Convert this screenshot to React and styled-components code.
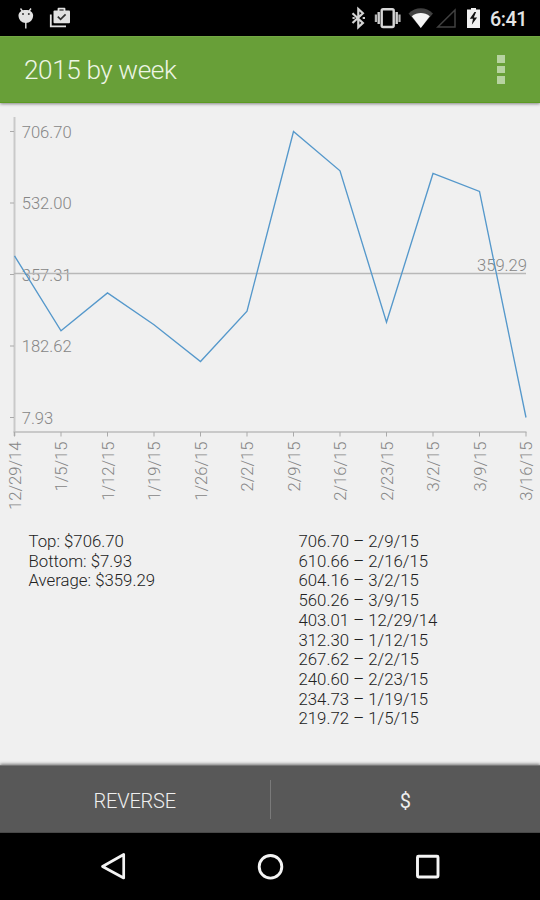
import React from 'react';
import styled, { createGlobalStyle } from 'styled-components';

const GlobalStyle = createGlobalStyle`
  * {
    box-sizing: border-box;
  }

  body {
    margin: 0;
    background: #000;
  }
`;

const Screen = styled.div`
  width: 540px;
  height: 900px;
  display: flex;
  flex-direction: column;
  overflow: hidden;
  background: #f0f0f0;
  font-family: Roboto, sans-serif;
  font-weight: 300;
`;

const StatusBar = styled.header`
  height: 36px;
  flex: none;
  display: flex;
  justify-content: space-between;
  background: #000;
`;

const StatusIcons = styled.svg`
  display: block;
  height: 36px;
  width: ${props => props.$width}px;
`;

const StatusRight = styled.div`
  display: flex;
  padding-right: 12px;
`;

const Clock = styled.time`
  color: #e4e4e4;
  font-size: 19.8px;
  font-weight: 500;
  letter-spacing: -0.5px;
  line-height: 39px;
  width: 38px;
  white-space: nowrap;
`;

const ActionBar = styled.div`
  height: 67px;
  flex: none;
  display: flex;
  align-items: center;
  justify-content: space-between;
  padding: 0 35px 0 24px;
  background: #689f38;
  border-top: 1px solid #73a844;
  border-bottom: 1px solid #5c9a22;
  box-shadow: 0 1px 3px rgba(0, 0, 0, 0.45);
`;

const Title = styled.h1`
  margin: 0;
  padding-top: 1px;
  color: #edf5e4;
  font-size: 26.2px;
  font-weight: 300;
  letter-spacing: -0.42px;
  line-height: 32px;
`;

const MenuButton = styled.div`
  display: flex;
  flex-direction: column;
  gap: 3px;
`;

const MenuDot = styled.span`
  width: 8px;
  height: 7.6px;
  background: #b7d3a1;
`;

const Chart = styled.svg`
  display: block;
  flex: none;
  width: 540px;
  height: 417px;
`;

const AxisLabel = styled.text`
  fill: #868686;
  font-family: Roboto, sans-serif;
  font-size: 16.6px;
  font-weight: 300;
`;

const Stats = styled.section`
  flex: 1;
  display: grid;
  grid-template-columns: 270px 1fr;
  padding: 12px 0 0 28.5px;
`;

const StatList = styled.ul`
  margin: 0;
  padding: 0;
  list-style: none;
  color: #222;
  font-size: 16.8px;
  line-height: 19.7px;
`;

const ButtonBar = styled.div`
  height: 68px;
  flex: none;
  display: flex;
  align-items: center;
  background: #585858;
  border-top: 1px solid #777;
  border-bottom: 1px solid #484848;
  box-shadow: 0 -1px 3px rgba(0, 0, 0, 0.5);
`;

const BarButton = styled.button`
  flex: 1;
  padding: 3px 0 0;
  border: 0;
  background: none;
  color: #efefef;
  font-family: inherit;
  font-size: 20px;
  font-weight: ${props => props.$weight || 300};
  letter-spacing: -0.2px;
  line-height: 40px;
`;

const Divider = styled.span`
  width: 1px;
  height: 39px;
  background: #7a7a7a;
`;

const NavBar = styled.nav`
  height: 67px;
  flex: none;
  background: #000;
`;

const NavIcons = styled.svg`
  display: block;
  width: 540px;
  height: 67px;
  fill: none;
  stroke: #f4f4f4;
  stroke-width: 2.9;
  stroke-linejoin: round;
`;

const weeks = [
  { date: '12/29/14', value: 403.01 },
  { date: '1/5/15', value: 219.72 },
  { date: '1/12/15', value: 312.3 },
  { date: '1/19/15', value: 234.73 },
  { date: '1/26/15', value: 144.7 },
  { date: '2/2/15', value: 267.62 },
  { date: '2/9/15', value: 706.7 },
  { date: '2/16/15', value: 610.66 },
  { date: '2/23/15', value: 240.6 },
  { date: '3/2/15', value: 604.16 },
  { date: '3/9/15', value: 560.26 },
  { date: '3/16/15', value: 7.93 },
];

const yTicks = [706.7, 532.0, 357.31, 182.62, 7.93];
const average = 359.29;

const MAX = 706.7;
const MIN = 7.93;
const LEFT = 14.5;
const RIGHT = 526;
const BASE = 329;

const xAt = i => LEFT + (i * (RIGHT - LEFT)) / (weeks.length - 1);
const yAt = value => 28.5 + ((MAX - value) / (MAX - MIN)) * 286;

const WeekChart = () => (
  <Chart viewBox="0 0 540 417">
    <path d={`M${LEFT} 14V${BASE + 4}`} stroke="#c9c9c9" strokeWidth="2" />
    <path d={`M${LEFT - 1} ${BASE}H${RIGHT + 0.5}`} stroke="#bdbdbd" strokeWidth="1.5" />
    {yTicks.map(value => (
      <React.Fragment key={value}>
        <path d={`M10 ${yAt(value)}H14`} stroke="#aaa" />
        <AxisLabel x="21.7" y={yAt(value) + 6}>{value.toFixed(2)}</AxisLabel>
      </React.Fragment>
    ))}
    <path d={`M14 170.5H${RIGHT}`} stroke="#b8b8b8" strokeWidth="1.4" />
    <AxisLabel x="527" y="167.5" textAnchor="end">{average}</AxisLabel>
    <polyline
      points={weeks.map((week, i) => `${xAt(i)},${yAt(week.value)}`).join(' ')}
      fill="none"
      stroke="#5598cb"
      strokeWidth="1.35"
    />
    {weeks.map((week, i) => (
      <React.Fragment key={week.date}>
        <path d={`M${xAt(i)} ${BASE}V${BASE + 4.5}`} stroke="#aaa" />
        <AxisLabel
          textAnchor="end"
          transform={`translate(${xAt(i) + 6} 338.5) rotate(-90)`}
        >
          {week.date}
        </AxisLabel>
      </React.Fragment>
    ))}
  </Chart>
);

const Notifications = () => (
  <StatusIcons $width={80} viewBox="0 0 80 36">
    {/* android debug head on a stick */}
    <path d="M20.5 8.5l2.2 3M31 8.5l-2.2 3M25.8 22v6.5" stroke="#e2e2e2" strokeWidth="1.4" fill="none" />
    <path d="M18.5 15.5c0-3.7 3.3-5.6 7.3-5.6s7.3 1.9 7.3 5.6c0 4.5-3.3 7.5-7.3 7.5s-7.3-3-7.3-7.5z" fill="#e2e2e2" />
    <circle cx="23" cy="14" r="1" fill="#333" />
    <circle cx="28.8" cy="14" r="1" fill="#333" />
    {/* play store updates */}
    <path d="M50.8 14.5V26.4H66" stroke="#e2e2e2" strokeWidth="1.8" fill="none" />
    <path d="M58.5 11V8.7h6V11" stroke="#e2e2e2" strokeWidth="1.8" fill="none" strokeLinejoin="round" />
    <rect x="53.5" y="10.5" width="16.5" height="12.8" rx="1" fill="#e2e2e2" />
    <path d="M57.8 16.6l2.8 2.7 5-5" stroke="#333" strokeWidth="1.7" fill="none" />
  </StatusIcons>
);

const SystemIcons = () => (
  <StatusIcons $width={140} viewBox="350 0 140 36">
    <path d="M352.5 13.2l10.4 9.7-4.6 4.3V9l4.600 4.300-10.400 9.700" stroke="#d4d4d4" strokeWidth="2.200" fill="none" />
    <path d="M352.500 18h2.200M362.700 18h2.300" stroke="#cfcfcf" strokeWidth="2.200" />
    <rect x="381.700" y="9.300" width="12" height="17.700" rx="1.400" stroke="#d6d6d6" strokeWidth="2.400" fill="none" />
    <path d="M378.700 12v12M396.700 12v12" stroke="#d0d0d0" strokeWidth="2.400" />
    <path d="M375.900 14.500v7.500M399.500 14.500v7.500" stroke="#b5b5b5" strokeWidth="2.200" />
    <path d="M408.500 13.500C415.500 6.500 426 6.500 433 13.500L420.800 28z" fill="#414141" />
    <path d="M411.800 16.300c5.300-4.300 12.700-4.300 18 0L420.800 28z" fill="#f5f5f5" />
    <path d="M437.800 27L455 10v17z" stroke="#414141" strokeWidth="1.500" fill="none" />
    <path d="M467 9.500h4V8h5v1.500h4V28h-13z" fill="#f0f0f0" />
    <path d="M474.500 12l-4.700 6.700h3.200l-1.200 6 5.300-7.300h-3.300l2.300-5.400z" fill="#111" />
  </StatusIcons>
);

const ranking = [...weeks].sort((a, b) => b.value - a.value).slice(0, 10);

const App = () => {
  return (
    <>
      <GlobalStyle />
      <Screen>
        <StatusBar>
          <Notifications />
          <StatusRight>
            <SystemIcons />
            <Clock>6:41</Clock>
          </StatusRight>
        </StatusBar>
        <ActionBar>
          <Title>2015 by week</Title>
          <MenuButton>
            <MenuDot />
            <MenuDot />
            <MenuDot />
          </MenuButton>
        </ActionBar>
        <WeekChart />
        <Stats>
          <StatList>
            <li>Top: $706.70</li>
            <li>Bottom: $7.93</li>
            <li>Average: $359.29</li>
          </StatList>
          <StatList>
            {ranking.map(week => (
              <li key={week.date}>{week.value.toFixed(2)} – {week.date}</li>
            ))}
          </StatList>
        </Stats>
        <ButtonBar>
          <BarButton>REVERSE</BarButton>
          <Divider />
          <BarButton $weight={400}>$</BarButton>
        </ButtonBar>
        <NavBar>
          <NavIcons viewBox="0 833 540 67">
            <path d="M123.7 854.500v23.500L102.500 866.500z" strokeWidth="2.700" />
            <circle cx="270.500" cy="866.800" r="11.300" />
            <rect x="417.500" y="856.300" width="20.500" height="20.700" rx="1" />
          </NavIcons>
        </NavBar>
      </Screen>
    </>
  );
};

export default App;
